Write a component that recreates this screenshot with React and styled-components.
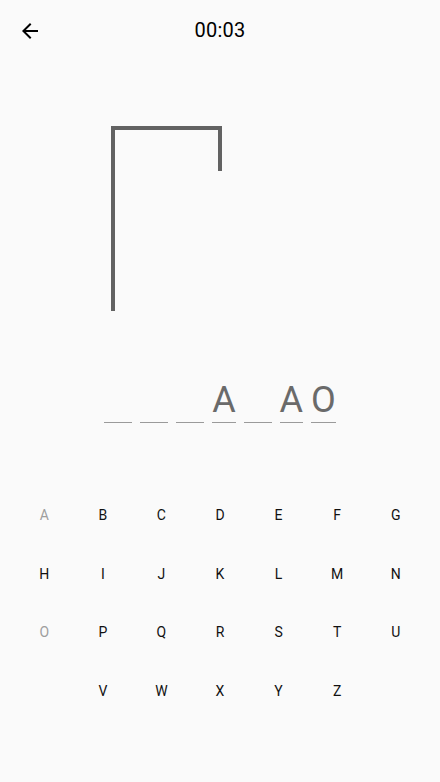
import React from "react";
import styled, { createGlobalStyle } from "styled-components";

const Global = createGlobalStyle`
  html, body { margin: 0; padding: 0; background: #fafafa; }
  body { font-family: Roboto, "Noto Sans", "Liberation Sans", sans-serif; color: #000; }
  * { box-sizing: border-box; }
`;

const Screen = styled.div`
  width: 440px;
  min-height: 782px;
  background: #fafafa;
  display: flex;
  flex-direction: column;
`;

const Header = styled.header`
  height: 60px;
  display: grid;
  grid-template-columns: 60px 1fr 60px;
  align-items: center;
`;

const BackButton = styled.button`
  width: 24px;
  height: 24px;
  margin: 2px 0 0 18px;
  padding: 0;
  border: 0;
  background: transparent;
  display: flex;
  align-items: center;
  justify-content: center;
  color: #000;
  cursor: pointer;
`;

const Title = styled.h1`
  margin: 0;
  text-align: center;
  font-size: 20px;
  font-weight: 400;
  color: #000;
  letter-spacing: 0.2px;
`;

const Gallows = styled.svg`
  display: block;
  margin-top: 66px;
  width: 440px;
  height: 186px;
`;

const Word = styled.div`
  margin-top: 67px;
  display: flex;
  justify-content: center;
  gap: 8px;
`;

const Slot = styled.span`
  display: block;
  min-width: ${(p) => (p.$blank ? "28px" : "0")};
  height: 44px;
  font-size: 36px;
  line-height: 42px;
  color: #6a6a6a;
  text-align: center;
  border-bottom: 1px solid #9a9a9a;
`;

const Keyboard = styled.div`
  margin-top: 63px;
  padding: 0 15px;
  display: grid;
  grid-template-columns: repeat(7, 1fr);
  grid-auto-rows: 58.5px;
`;

const Key = styled.button`
  grid-column-start: ${(p) => p.$start || "auto"};
  border: 0;
  padding: 0;
  background: transparent;
  font-family: Roboto, "Noto Sans", "Liberation Sans", sans-serif;
  font-size: 14px;
  color: ${(p) => (p.$used ? "#9e9e9e" : "#111")};
  display: flex;
  align-items: center;
  justify-content: center;
  cursor: pointer;
`;

const word = ["", "", "", "A", "", "A", "O"];
const used = new Set(["A", "O"]);
const letters = "ABCDEFGHIJKLMNOPQRSTUVWXYZ".split("");

export default function App() {
  return (
    <Screen>
      <Global />
      <Header>
        <BackButton aria-label="back">
          <svg width="24" height="24" viewBox="0 0 24 24" fill="currentColor">
            <path d="M20 11H7.83l5.59-5.59L12 4l-8 8 8 8 1.41-1.41L7.83 13H20v-2z" />
          </svg>
        </BackButton>
        <Title>00:03</Title>
        <span />
      </Header>
      <Gallows viewBox="0 0 440 186">
        <g fill="#626262">
          <rect x="111" y="0" width="4" height="185" />
          <rect x="111" y="0" width="111" height="4" />
          <rect x="218" y="0" width="4" height="45" />
        </g>
      </Gallows>
      <Word>
        {word.map((c, i) => (
          <Slot key={i} $blank={!c}>
            {c}
          </Slot>
        ))}
      </Word>
      <Keyboard>
        {letters.map((l) => (
          <Key key={l} $used={used.has(l)} $start={l === "V" ? 2 : undefined}>
            {l}
          </Key>
        ))}
      </Keyboard>
    </Screen>
  );
}
